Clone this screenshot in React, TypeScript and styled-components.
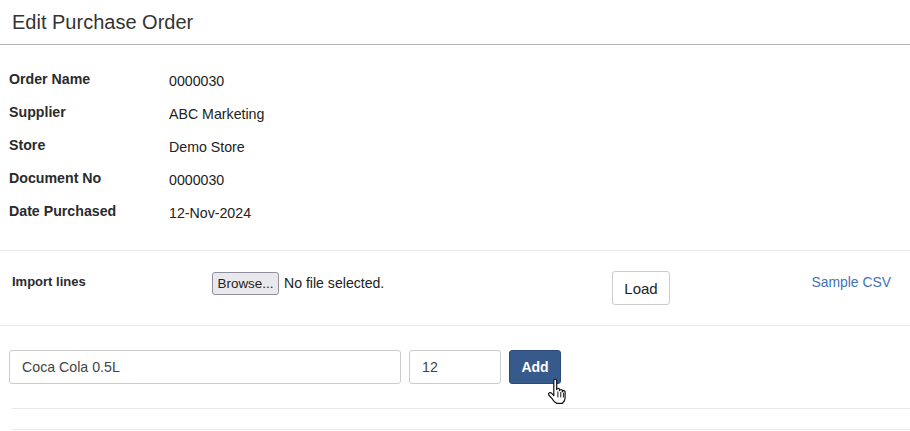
import React from "react";
import styled, { createGlobalStyle } from "styled-components";

const Global = createGlobalStyle`
  html, body { margin: 0; padding: 0; background: #fff; }
  body { font-family: "Liberation Sans", Arial, sans-serif; font-size: 14px; color: #222; }
  * { box-sizing: border-box; }
`;
const Page = styled.div`width: 910px; height: 431px; overflow: hidden; background: #fff;`;
const Header = styled.header`height: 45px; padding: 12px 12px 0; border-bottom: 1px solid #b4b4b4;`;
const Title = styled.h1`margin: 0; font-size: 20px; line-height: 20px; font-weight: 400; color: #333;`;
const Details = styled.section`height: 206px; padding-top: 20px; border-bottom: 1px solid #e8e8e8;`;
const DetailRow = styled.div`display: grid; grid-template-columns: 160px 1fr; height: 33px; padding-left: 9px; align-items: start;`;
const DetailLabel = styled.div`font-weight: 700; font-size: 14.2px; line-height: 29px; color: #2b2b2b;`;
const DetailValue = styled.div`font-size: 14.2px; line-height: 32px; color: #222;`;
const ImportRow = styled.section`height: 75px; display: flex; align-items: flex-start; padding: 20px 18px 0 12px; border-bottom: 1px solid #e8e8e8;`;
const ImportLabel = styled.div`width: 200px; font-weight: 700; font-size: 13px; line-height: 22px; color: #2b2b2b;`;
const FileField = styled.div`display: flex; align-items: center; gap: 5px; width: 400px; height: 24px;`;
const Browse = styled.span`display: inline-flex; align-items: center; justify-content: center; width: 67px; height: 23px; border: 1px solid #8f8f9d; border-radius: 3px; background: #e9e9ed; font-size: 13.4px;`;
const FileText = styled.span`font-size: 14.1px;`;
const Button = styled.button`height: 34px; border-radius: 3px; font-family: inherit; font-size: 14px; padding: 0;`;
const LoadButton = styled(Button)`width: 58px; background: #fff; border: 1px solid #ccc; color: #222; font-size: 15px;`;
const SampleLink = styled.a`margin-left: auto; margin-right: 1px; color: #3f72b8; font-size: 13.9px; line-height: 22px;`;
const AddRow = styled.section`height: 82px; display: flex; align-items: flex-start; gap: 8px; padding: 24px 0 0 9px; position: relative;`;
const Input = styled.input<{ $width: number }>`width: ${p => p.$width}px; height: 34px; border: 1px solid #ccc; border-radius: 3px; padding: 0 12px; font: 14.2px "Liberation Sans", Arial, sans-serif; color: #444;`;
const AddButton = styled(Button)`width: 52px; background: #375a8c; border: 1px solid #2b4a78; color: #fff; font-weight: 700; font-size: 14px;`;
const Cursor = styled.svg`position: absolute; left: 546px; top: 51px;`;
const Rule = styled.div`height: 21px; margin-left: 12px; border-top: 1px solid #e8e8e8;`;

export default function App() {
  const rows = [["Order Name","0000030"],["Supplier","ABC Marketing"],["Store","Demo Store"],["Document No","0000030"],["Date Purchased","12-Nov-2024"]];
  return (
    <Page>
      <Global />
      <Header><Title>Edit Purchase Order</Title></Header>
      <Details>
        {rows.map(([l, v]) => (
          <DetailRow key={l}><DetailLabel>{l}</DetailLabel><DetailValue>{v}</DetailValue></DetailRow>
        ))}
      </Details>
      <ImportRow>
        <ImportLabel>Import lines</ImportLabel>
        <FileField><Browse>Browse...</Browse><FileText>No file selected.</FileText></FileField>
        <LoadButton>Load</LoadButton>
        <SampleLink>Sample CSV</SampleLink>
      </ImportRow>
      <AddRow>
        <Input $width={392} defaultValue="Coca Cola 0.5L" />
        <Input $width={92} defaultValue="12" />
        <AddButton>Add</AddButton>
        <Cursor width="24" height="30" viewBox="0 0 20 25">
          <path d="M6.500 3c0-1.500 2.400-1.500 2.400 0v7.500c0-1.300 2.400-1.300 2.400 0v.8c0-1.200 2.300-1.200 2.300 0v.9c0-1.100 2.300-1.100 2.300 0v5.300c0 2.500-1.300 3.500-2.300 4.500H9c-1.800-.8-2.800-2-3.600-3.500L2.300 15c-.8-1.700 1.200-2.800 2.500-1.300L6.500 15.500Z" fill="#fff" stroke="#111" strokeWidth="1" strokeLinejoin="round"/>
          <path d="M9.900 12v5M12.300 12.500v4.500M14.500 13v4" stroke="#111" strokeWidth=".8" fill="none"/>
        </Cursor>
      </AddRow>
      <Rule />
      <Rule />
    </Page>
  );
}
